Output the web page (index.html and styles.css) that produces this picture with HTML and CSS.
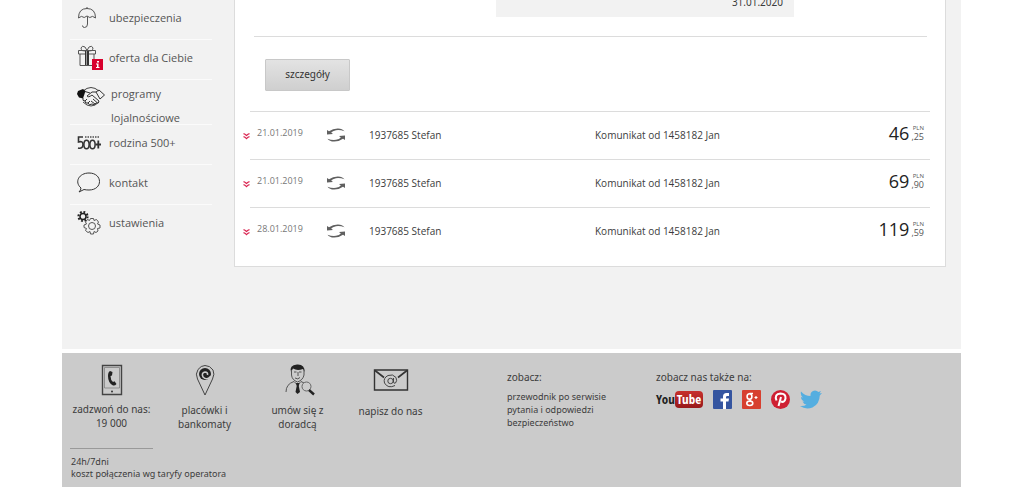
FILE: index.html
```html
<!DOCTYPE html>
<html lang="pl">
<head>
<meta charset="utf-8">
<title>Płatności</title>
<link rel="stylesheet" href="styles.css">
</head>
<body>
<svg class="defs" aria-hidden="true">
  <symbol id="more" viewBox="0 0 7 7"><path d="M.5 .7 Q2 1 3.5 2.5 Q5 1 6.5 .7 M.5 3.7 Q2 4 3.5 5.6 Q5 4 6.5 3.7" fill="none" stroke="#d9214e" stroke-width="1.2"/></symbol>
  <symbol id="cycle" viewBox="0 0 18 14"><path id="arc" d="M0 2 L2 3.200 Q6 .3 11 .4 Q15.500 .6 17.500 3.300 Q13 1.600 9 2.200 Q5.500 2.800 4.200 4.600 L6 6 L0 6.500 Z" fill="#606060"/><path transform="rotate(180 9 7)" d="M0 2 L2 3.200 Q6 .3 11 .4 Q15.500 .6 17.500 3.300 Q13 1.600 9 2.200 Q5.500 2.800 4.200 4.600 L6 6 L0 6.500 Z" fill="#606060"/></symbol>
</svg>
<div class="page">
  <div class="main">
    <nav class="menu">
      <a class="item first" href="#">
        <svg class="icon" viewBox="0 0 24 24"><path d="M1.500 12 Q1.500 2.500 10 2.500 Q18.500 2.500 18.500 12 Q15.500 9 12.800 11.500 Q10 8.500 7.200 11.500 Q4.500 9 1.500 12 Z M10.500 10.500 V18 Q10.500 21.500 7.500 21.500 Q5.500 21.500 5.500 19.500 M10 1 V3" fill="none" stroke="#555" stroke-width="1"/></svg>
        <span>ubezpieczenia</span>
      </a>
      <a class="item" href="#">
        <svg class="icon wide" viewBox="0 0 26 26"><path d="M1.500 5.500 H18.500 V9 H1.500 Z M3 9 V20.500 H17 V9 M10 5.500 Q4 7 4 3 Q5 0 8 2 L10 5.500 Q16 7 16 3 Q15 0 12 2 Z" fill="none" stroke="#555"/><path d="M8 6 H12 V20 H8 Z" fill="#333"/><path d="M9.500 6 V20" stroke="#999"/><path d="M15 14 H26 V25 H15 Z" fill="#d8002d"/><path d="M20 16 H22 V17.500 H20 Z M19 18.500 H21.500 V22 H22.500 V23 H19 V22 H20 V19.500 H19 Z" fill="#fff"/></svg>
        <span>oferta dla Ciebie</span>
      </a>
      <a class="item two-lines" href="#">
        <svg class="icon hands" viewBox="0 0 28 20"><path d="M6 4 Q14 -3 22 4 M6 15 Q14 23 22 15" fill="none" stroke="#444"/><path d="M1 4 L6 2 L8.500 4 L6 11.500 L2 10.500 L0 7 Z" fill="#111"/><path d="M27.500 8 L22 3 L19 5 L23 12 Z M19 5 L15 5 L10 9 Q11 11 15 8 L22 14 Q22 17 19 16 Q18 19 15 17 Q12 19 11 16 Q8 17 8 14 Q5 14 6 11 M14 14 L18 17 M16 12 L20 15.500 M8 4.500 L13 6 M8 14 L10 12 M11 16 L13 14" fill="none" stroke="#333"/></svg>
        <span>programy<br>lojalnościowe</span>
      </a>
      <a class="item family" href="#">
        <svg class="icon" viewBox="0 0 24 16" overflow="visible"><path d="M8 2 H23" stroke="#777" stroke-width="2" stroke-dasharray="1.500 1"/><path d="M6 2 H1.500 V7 Q6 5.500 6 9.500 Q6 14 1 13" fill="none" stroke="#333" stroke-width="1.600"/><ellipse cx="9.500" cy="9.500" rx="2.600" ry="4.300" fill="none" stroke="#333" stroke-width="1.500"/><ellipse cx="15.500" cy="9.500" rx="2.600" ry="4.300" fill="none" stroke="#333" stroke-width="1.500"/><path d="M18.500 9.500 H24 M21.300 5.500 V13.500" stroke="#333" stroke-width="1.800"/></svg>
        <span>rodzina 500+</span>
      </a>
      <a class="item" href="#">
        <svg class="icon" viewBox="0 0 24 24"><path d="M4 17 C-3 11 2 2 12 2 C26 2 26 19 12 19 Q9 19 7 18.500 L2 21 Q4 19 4 17 Z" fill="none" stroke="#333"/></svg>
        <span>kontakt</span>
      </a>
      <a class="item last" href="#">
        <svg class="icon" viewBox="0 0 24 24"><circle cx="6" cy="5.500" r="3" fill="none" stroke="#222" stroke-width="1.500"/><circle cx="6" cy="5.500" r="4.600" fill="none" stroke="#222" stroke-width="2" stroke-dasharray="1.800 1.800"/><circle cx="15" cy="15" r="3.500" fill="none" stroke="#555"/><path d="M13.500 7.500 H16.500 L17 9.500 L19.500 8.500 L21.500 11 L20.500 13 L23 14 V17 L20.500 17.500 L21 20 L19 21.500 L17 20.500 L16.500 23 H13.500 L13 20.500 L11 21.500 L8.500 19.500 L9.500 17.500 L7 16.500 V14 L9.500 13 L8.500 11 L10.500 8.500 L12.500 9.500 Z" fill="none" stroke="#555"/></svg>
        <span>ustawienia</span>
      </a>
    </nav>
    <main class="card">
      <div class="date-box">31.01.2020</div>
      <hr class="rule">
      <button class="details" type="button">szczegóły</button>
      <table class="history">
        <colgroup><col class="c-more"><col class="c-date"><col class="c-kind"><col class="c-name"><col><col class="c-sum"></colgroup>
        <tr>
          <td class="more"><svg><use href="#more"/></svg></td><td class="date">21.01.2019</td><td class="kind"><svg><use href="#cycle"/></svg></td><td>1937685 Stefan</td><td>Komunikat od 1458182 Jan</td>
          <td class="sum"><div class="amount"><span class="whole">46</span><span class="part"><small>PLN</small><span>,25</span></span></div></td>
        </tr>
        <tr>
          <td class="more"><svg><use href="#more"/></svg></td><td class="date">21.01.2019</td><td class="kind"><svg><use href="#cycle"/></svg></td><td>1937685 Stefan</td><td>Komunikat od 1458182 Jan</td>
          <td class="sum"><div class="amount"><span class="whole">69</span><span class="part"><small>PLN</small><span>,90</span></span></div></td>
        </tr>
        <tr>
          <td class="more"><svg><use href="#more"/></svg></td><td class="date">28.01.2019</td><td class="kind"><svg><use href="#cycle"/></svg></td><td>1937685 Stefan</td><td>Komunikat od 1458182 Jan</td>
          <td class="sum"><div class="amount"><span class="whole">119</span><span class="part"><small>PLN</small><span>,59</span></span></div></td>
        </tr>
      </table>
    </main>
  </div>
  <footer class="footer">
    <div class="contacts">
      <a class="contact phone" href="#">
        <svg viewBox="0 0 36 32"><path d="M8.500 1.500 H27.500 V30.500 H8.500 Z" fill="none" stroke="#444" stroke-width="1.400"/><path d="M10.500 3.500 H25.500 V24 H10.500 Z" fill="none" stroke="#777" stroke-width=".7"/><circle cx="18" cy="27.500" r="1" fill="#333"/><path d="M16 7 L18.500 8 L18 11.500 L16.500 12 Q16.500 16 19 18 L20.500 17.300 L22.500 20 Q21 22 19 21.500 Q14 19 14 12 Q14 8 16 7 Z" fill="#222"/></svg>
        <span>zadzwoń do nas:<br>19 000</span>
      </a>
      <a class="contact" href="#">
        <svg viewBox="0 0 36 32"><path d="M18 31 L10.500 15 Q8 10 11 5.500 Q14 1.500 18 1.500 Q23 1.500 26 6 Q28 10 25.500 15 Z" fill="none" stroke="#444"/><circle cx="18" cy="10" r="6" fill="#222"/><path d="M24 12 Q20 17 16 13 Q14 9 18 8 Q21 8 20.500 11" fill="none" stroke="#ccc" stroke-width="1.600"/></svg>
        <span>placówki i<br>bankomaty</span>
      </a>
      <a class="contact" href="#">
        <svg viewBox="0 0 36 32"><path d="M11 8 Q9 1 17 0.500 Q25 0 24.500 8 L23 5 Q17 7 13 4.500 Z" fill="#222"/><path d="M11.500 6 V11 Q12 16 17.500 18 Q23 16 24 11 V6 M14 8 H16.500 M19 8 H21.500 M18 8 V12 M15 14 Q18 16 20 13.500 M6 28 Q6 20 14 17.500 L17.500 21 L21 17.500 L24 19" fill="none" stroke="#555"/><path d="M16 19 H19.500 L18.800 22 L20 28 L17.500 30 L15.500 28 L16.700 22 Z" fill="#222"/><circle cx="26.500" cy="22.500" r="4.500" fill="#ccc" stroke="#666"/><path d="M29 26 L34 30.500" stroke="#222" stroke-width="2.400"/></svg>
        <span>umów się z<br>doradcą</span>
      </a>
      <a class="contact mail" href="#">
        <svg viewBox="0 0 36 32"><path d="M1.500 6 H34.500 V26 H1.500 Z" fill="none" stroke="#333" stroke-width="1.400"/><path d="M2 6.500 L11 13.500 M34 6.500 L25 13.500" stroke="#333" stroke-width="1.600"/><circle cx="17.500" cy="17" r="2.700" fill="none" stroke="#444"/><path d="M20.500 14 V18 Q21 20 22.500 19 Q24.500 17 23 13.500 Q20 9.500 15 11.500 Q10 14 11.500 19 Q15 25 22 21.500" fill="none" stroke="#444"/></svg>
        <span>napisz do nas</span>
      </a>
    </div>
    <div class="links">
      <h2>zobacz:</h2>
      <a href="#">przewodnik po serwisie</a>
      <a href="#">pytania i odpowiedzi</a>
      <a href="#">bezpieczeństwo</a>
    </div>
    <div class="social">
      <h2>zobacz nas także na:</h2>
      <div class="logos">
        <a class="youtube" href="#"><span>You</span><b>Tube</b></a>
        <a href="#" aria-label="Facebook"><svg viewBox="0 0 19 19"><rect width="19" height="19" rx="1" fill="#3555a0"/><path d="M10 19 V11.500 H7.500 V8.500 H10 V6.500 Q10 3 13.500 3 H16 V6 H14.300 Q13 6 13 7.300 V8.500 H16 L15.500 11.500 H13 V19 Z" fill="#fff"/></svg></a>
        <a href="#" aria-label="Google+"><svg viewBox="0 0 19 19"><rect width="19" height="19" rx="1" fill="#d7402f"/><ellipse cx="7.500" cy="6.500" rx="2.400" ry="2.800" fill="none" stroke="#fff" stroke-width="1.600"/><path d="M7.500 3.500 H11 M8 9 Q7 10 9 11" fill="none" stroke="#fff" stroke-width="1.300"/><ellipse cx="7.800" cy="13.300" rx="3" ry="2.200" fill="none" stroke="#fff" stroke-width="1.600"/><path d="M12.500 7.500 H15.500 M14 6 V9" stroke="#fff" stroke-width="1.200"/></svg></a>
        <a href="#" aria-label="Pinterest"><svg viewBox="0 0 19 19"><circle cx="9.500" cy="9.500" r="9.500" fill="#cf1f32"/><path d="M5.500 10.500 Q3 4 9.500 3.500 Q15 3.500 14.500 8.500 Q13.500 13 10 11.500 M10 7 L7.500 16" fill="none" stroke="#fff" stroke-width="2"/></svg></a>
        <a href="#" aria-label="Twitter"><svg class="bird" viewBox="0 0 22 19"><path d="M1 1.500 Q5 6 10.500 6 Q10 1 15 .5 Q17 .5 18.500 2 L21 1 L19.500 3.500 L22 3 L19.800 5.500 Q19.500 14 12.500 17.500 Q5.500 20 0 16 Q4 16.500 6.500 14.500 Q3.500 14 2.500 11.500 H4.500 Q1 10 1 7 L3 7.500 Q0 5 1 1.500 Z" fill="#55aee0"/></svg></a>
      </div>
    </div>
    <p class="note">24h/7dni<br>koszt połączenia wg taryfy operatora</p>
  </footer>
</div>
</body>
</html>
```
FILE: styles.css
```css
* { box-sizing: border-box; }
body {
  margin: 0;
  background: #fff;
  color: #3c3c3c;
  font: 10px/13px "Noto Sans", "Open Sans", sans-serif;
}
a { color: inherit; text-decoration: none; }
svg { display: block; }
.defs { position: absolute; width: 0; height: 0; }
.page { max-width: 899px; margin: 0 auto; }

.main {
  display: flex;
  align-items: flex-start;
  background: #f2f2f2;
  padding: 0 15px 82px 8px;
}
.menu {
  flex: 0 0 164px;
  padding-right: 22px;
  color: #555;
  font: 11px/24px "Open Sans", sans-serif;
}
.item {
  display: flex;
  align-items: center;
  gap: 8px;
  min-height: 40px;
  padding: 0 0 4px 7px;
  border-bottom: 1px solid #fbfbfb;
}
.icon { flex: none; width: 24px; height: 24px; }
.wide { width: 26px; height: 26px; margin-right: -2px; }
.hands { width: 28px; height: 20px; margin: 5px -2px 0 0; }
.two-lines { height: 45px; align-items: flex-start; padding: 2px 0 0 7px; }
.family { padding-bottom: 3px; }
.family .icon { height: 16px; }
.last { border: 0; }

.card {
  flex: 1;
  padding-bottom: 10px;
  background: #fff;
  border: solid #dcdcdc;
  border-width: 0 1px 1px;
}
.date-box {
  width: 298px;
  height: 17px;
  margin-left: 261px;
  padding-right: 11px;
  background: #f2f2f2;
  text-align: right;
  line-height: 5px;
}
.rule {
  height: 1px;
  margin: 19px 18px 22px 19px;
  border: 0;
  background: #dcdcdc;
}
.details {
  display: block;
  width: 85px;
  height: 32px;
  margin: 0 0 20px 30px;
  padding: 0 0 2px;
  border: 1px solid #c8c8c8;
  border-radius: 1px;
  background: linear-gradient(#e3e3e3, #cfcfcf);
  color: #333;
  font: inherit;
}
.history {
  width: calc(100% - 22px);
  margin-left: 7px;
  border-collapse: collapse;
  table-layout: fixed;
  font: 10px/14px "Open Sans", sans-serif;
}
.c-more { width: 8px; }
.c-date { width: 77px; }
.c-kind { width: 42px; }
.c-name { width: 226px; }
.c-sum { width: 90px; }
.history td { height: 48px; padding: 0 0 1px; border-top: 1px solid #dcdcdc; }
.history .more { border: 0; }
.more svg { width: 7px; height: 7px; margin: 2px 0 0 1px; }
.history .date { padding: 0 0 5px 7px; color: #777; font-size: 9px; }
.kind svg { width: 18px; height: 14px; }
.history .sum { padding: 0 6px 6px 0; }
.amount { display: flex; justify-content: flex-end; align-items: center; gap: 2px; }
.whole { color: #222; font-size: 18px; line-height: 24px; }
.part { display: flex; flex-direction: column; align-items: flex-end; color: #555; font-size: 9px; line-height: 9px; }
.part small { font-size: 6px; line-height: 7px; }

.footer {
  display: grid;
  grid-template-columns: 445px 149px 1fr;
  align-content: start;
  min-height: 134px;
  margin-top: 4px;
  background: #cbcbcb;
}
.contacts { display: flex; }
.contact { display: flex; flex-direction: column; align-items: center; width: 93px; padding-top: 11px; text-align: center; line-height: 14px; white-space: nowrap; }
.contact svg { width: 36px; height: 32px; margin-bottom: 7px; }
.phone { width: 83px; margin: 0 5px 0 8px; border-bottom: 1px solid #999; padding-bottom: 18px; }
.phone svg { margin-bottom: 6px; }
.mail svg { margin-bottom: 8px; }
.footer h2 { margin: 18px 0 6px; font: 10px/13px "Noto Sans", sans-serif; }
.links a { display: block; font-size: 9px; line-height: 13px; }
.logos { display: flex; align-items: center; gap: 10px; }
.logos svg { width: 19px; height: 19px; }
.logos .bird { width: 22px; }
.youtube { display: flex; align-items: center; font: bold 13px/17px "Liberation Sans Narrow", "Open Sans Condensed", "Roboto Condensed", "Liberation Sans", sans-serif; color: #222; }
.youtube b { padding: 0 2px; border-radius: 4px; background: linear-gradient(#c7302c, #98191b); color: #fff; }
.note { grid-column: 1 / -1; margin: 7px 0 0 9px; font-size: 9px; line-height: 12px; }
```
